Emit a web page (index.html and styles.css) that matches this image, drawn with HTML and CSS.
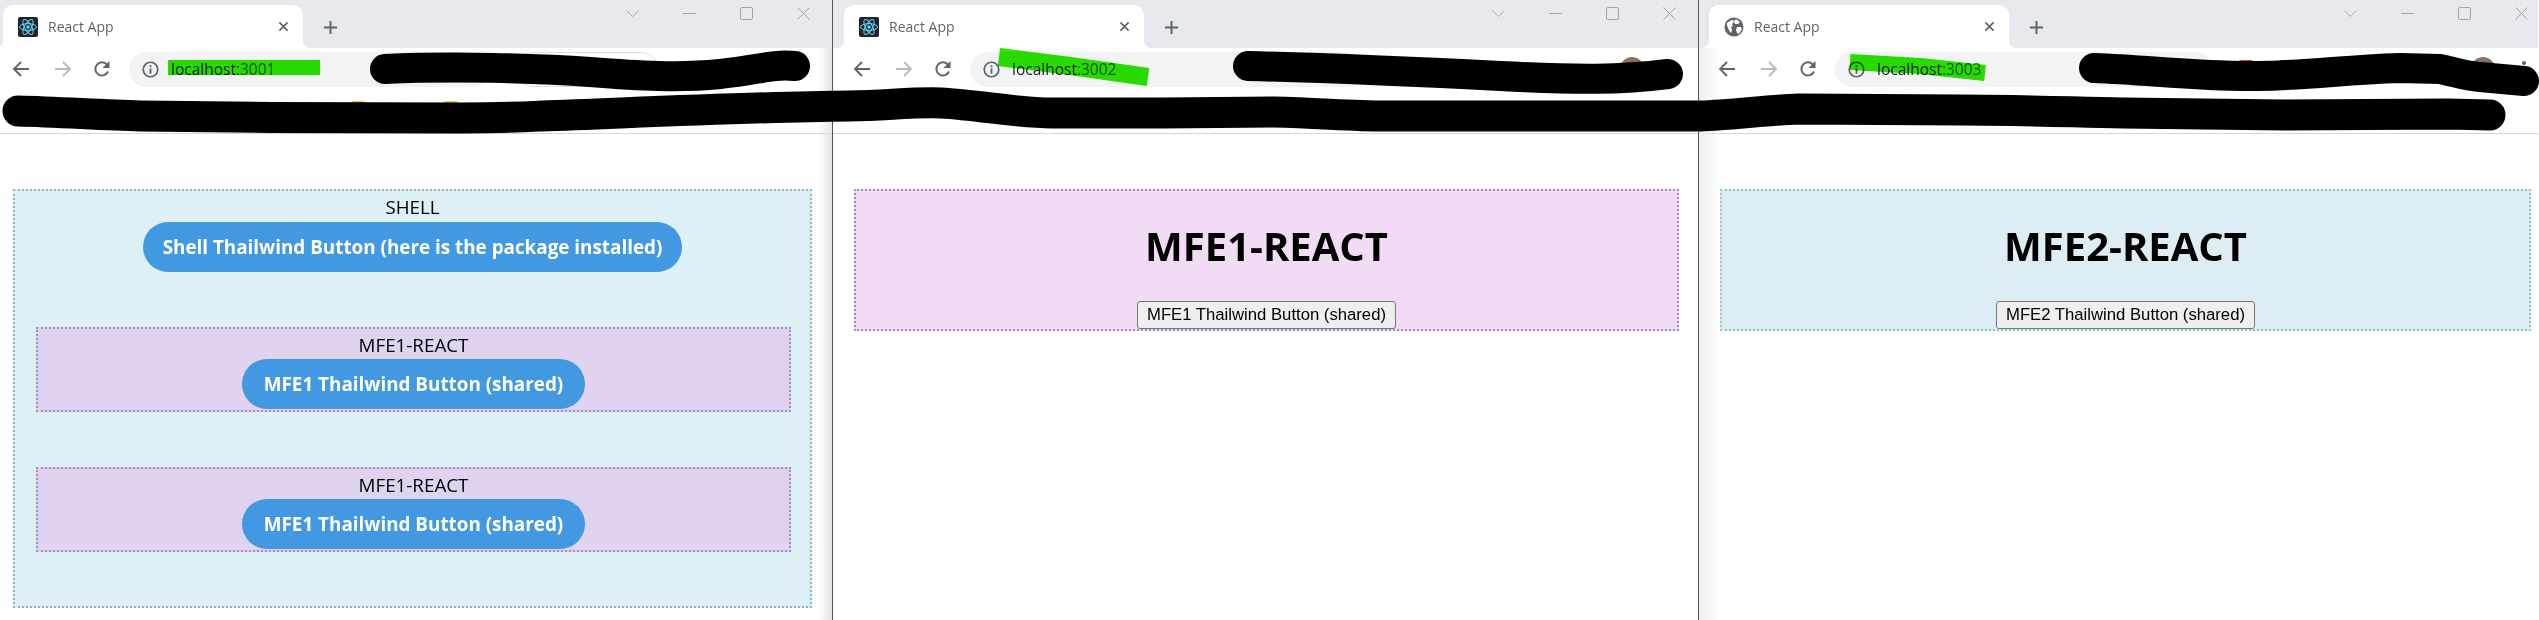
FILE: index.html
```html
<!DOCTYPE html>
<html lang="en">
<head>
    <meta charset="UTF-8">
    <title>React App</title>
    <link rel="stylesheet" href="styles.css">
</head>
<body>
<svg class="sprites" width="0" height="0">
    <symbol id="i-react" viewBox="0 0 20 20">
        <rect width="20" height="20" rx="2" fill="#20232a"/>
        <g fill="none" stroke="#61dafb" stroke-width="1">
            <ellipse cx="10" cy="10" rx="8.5" ry="3.4"/>
            <ellipse cx="10" cy="10" rx="8.5" ry="3.4" transform="rotate(60 10 10)"/>
            <ellipse cx="10" cy="10" rx="8.5" ry="3.4" transform="rotate(120 10 10)"/>
        </g>
        <circle cx="10" cy="10" r="1.7" fill="#61dafb"/>
    </symbol>
    <symbol id="i-globe" viewBox="0 0 20 20">
        <circle cx="10" cy="10" r="9.5" fill="#5f6368"/>
        <path d="M3 6c2-1 3-3 6-3l1 2-2 2 1 2-2 1 1 3-1 3C5 14 4 10 3 9zM12 2l4 3-2 2h-3l-1-3zM13 10l4 0 1 2-3 5-2-1-1-3z" fill="#fff"/>
    </symbol>
    <symbol id="i-back" viewBox="0 0 18 18">
        <path d="M17 9H2M9 2L2 9l7 7" fill="none" stroke="currentColor" stroke-width="1.9"/>
    </symbol>
    <symbol id="i-forward" viewBox="0 0 18 18">
        <path d="M1 9h15M9 2l7 7-7 7" fill="none" stroke="currentColor" stroke-width="1.9"/>
    </symbol>
    <symbol id="i-reload" viewBox="0 0 18 18">
        <path d="M15 11.5A6.6 6.6 0 1 1 14 4.6" fill="none" stroke="currentColor" stroke-width="1.9"/>
        <path d="M16.5 1v7h-7z" fill="currentColor"/>
    </symbol>
    <symbol id="i-info" viewBox="0 0 18 18">
        <circle cx="9" cy="9" r="7.7" fill="none" stroke="currentColor" stroke-width="1.8"/>
        <path d="M8 8h2v5.5H8zM8 4.6h2v2H8z" fill="currentColor"/>
    </symbol>
    <symbol id="i-close" viewBox="0 0 12 12">
        <path d="M1.5 1.5l9 9M10.5 1.5l-9 9" fill="none" stroke="currentColor" stroke-width="1.7"/>
    </symbol>
    <symbol id="i-plus" viewBox="0 0 16 16">
        <path d="M8 1v14M1 8h14" fill="none" stroke="currentColor" stroke-width="2"/>
    </symbol>
    <symbol id="i-chevron" viewBox="0 0 13 13">
        <path d="M.5 3.5l6 6 6-6" fill="none" stroke="currentColor" stroke-width=".9"/>
    </symbol>
    <symbol id="i-min" viewBox="0 0 13 13">
        <path d="M0 6.5h13" fill="none" stroke="currentColor" stroke-width="1"/>
    </symbol>
    <symbol id="i-max" viewBox="0 0 13 13">
        <rect x=".5" y=".5" width="12" height="12" rx="1.5" fill="none" stroke="currentColor" stroke-width="1"/>
    </symbol>
    <symbol id="i-x" viewBox="0 0 13 13">
        <path d="M.5 .5l12 12M12.5 .5l-12 12" fill="none" stroke="currentColor" stroke-width="1"/>
    </symbol>
</svg>

<div class="desktop">
    <!-- 3001 -->
    <div class="window win-shell">
        <div class="tabstrip">
            <div class="tab">
                <svg class="favicon"><use href="#i-react"/></svg>
                <span class="tab-title">React App</span>
                <svg class="tab-close"><use href="#i-close"/></svg>
            </div>
            <svg class="new-tab"><use href="#i-plus"/></svg>
            <div class="win-controls">
                <svg class="ctl"><use href="#i-chevron"/></svg>
                <svg class="ctl"><use href="#i-min"/></svg>
                <svg class="ctl"><use href="#i-max"/></svg>
                <svg class="ctl"><use href="#i-x"/></svg>
            </div>
        </div>
        <div class="toolbar">
            <svg class="nav"><use href="#i-back"/></svg>
            <svg class="nav nav-off"><use href="#i-forward"/></svg>
            <svg class="nav"><use href="#i-reload"/></svg>
            <div class="address">
                <svg class="info"><use href="#i-info"/></svg>
                <span class="host">localhost<span class="port">:3001</span></span>
            </div>
            <div class="search-pill"></div>
            <div class="avatar"></div>
        </div>
        <div class="bookmarks">
            <span class="folder"></span><span class="folder"></span><span class="folder"></span><span class="folder"></span>
        </div>
        <div class="page">
            <div class="shell-box">
                <div class="box-title">SHELL</div>
                <button class="tw-btn">Shell Thailwind Button (here is the package installed)</button>
                <div class="mfe-box">
                    <div class="box-title">MFE1-REACT</div>
                    <button class="tw-btn">MFE1 Thailwind Button (shared)</button>
                </div>
                <div class="mfe-box">
                    <div class="box-title">MFE1-REACT</div>
                    <button class="tw-btn">MFE1 Thailwind Button (shared)</button>
                </div>
            </div>
        </div>
    </div>

    <!-- 3002 -->
    <div class="window win-mfe1">
        <div class="tabstrip">
            <div class="tab">
                <svg class="favicon"><use href="#i-react"/></svg>
                <span class="tab-title">React App</span>
                <svg class="tab-close"><use href="#i-close"/></svg>
            </div>
            <svg class="new-tab"><use href="#i-plus"/></svg>
            <div class="win-controls">
                <svg class="ctl"><use href="#i-chevron"/></svg>
                <svg class="ctl"><use href="#i-min"/></svg>
                <svg class="ctl"><use href="#i-max"/></svg>
                <svg class="ctl"><use href="#i-x"/></svg>
            </div>
        </div>
        <div class="toolbar">
            <svg class="nav"><use href="#i-back"/></svg>
            <svg class="nav nav-off"><use href="#i-forward"/></svg>
            <svg class="nav"><use href="#i-reload"/></svg>
            <div class="address">
                <svg class="info"><use href="#i-info"/></svg>
                <span class="host">localhost<span class="port">:3002</span></span>
            </div>
            <div class="avatar"></div>
        </div>
        <div class="bookmarks"></div>
        <div class="page">
            <div class="remote-box remote-pink">
                <h1 class="remote-title">MFE1-REACT</h1>
                <button class="plain-btn">MFE1 Thailwind Button (shared)</button>
            </div>
        </div>
    </div>

    <!-- 3003 -->
    <div class="window win-mfe2">
        <div class="tabstrip">
            <div class="tab">
                <svg class="favicon"><use href="#i-globe"/></svg>
                <span class="tab-title">React App</span>
                <svg class="tab-close"><use href="#i-close"/></svg>
            </div>
            <svg class="new-tab"><use href="#i-plus"/></svg>
            <div class="win-controls">
                <svg class="ctl"><use href="#i-chevron"/></svg>
                <svg class="ctl"><use href="#i-min"/></svg>
                <svg class="ctl"><use href="#i-max"/></svg>
                <svg class="ctl"><use href="#i-x"/></svg>
            </div>
        </div>
        <div class="toolbar">
            <svg class="nav"><use href="#i-back"/></svg>
            <svg class="nav nav-off"><use href="#i-forward"/></svg>
            <svg class="nav"><use href="#i-reload"/></svg>
            <div class="address">
                <svg class="info"><use href="#i-info"/></svg>
                <span class="host">localhost<span class="port">:3003</span></span>
            </div>
            <span class="ext ext-red"></span>
            <span class="ext ext-dark"></span>
            <div class="avatar"></div>
            <span class="kebab"></span>
        </div>
        <div class="bookmarks"></div>
        <div class="page">
            <div class="remote-box remote-blue">
                <h1 class="remote-title">MFE2-REACT</h1>
                <button class="plain-btn">MFE2 Thailwind Button (shared)</button>
            </div>
        </div>
    </div>
</div>

<!-- marker scribbles drawn over the screenshot -->
<svg class="scribbles" width="2539" height="140" viewBox="0 0 2539 140">
    <g class="mark-green">
        <path d="M168 67.5H320" stroke-width="15"/>
        <path d="M999 57L1070 66L1148 77" stroke-width="18"/>
        <path d="M1850 62L1920 66L1985 73" stroke-width="16"/>
    </g>
    <g class="mark-black">
        <path d="M385 69C450 66 540 68 590 72S680 78 720 74S770 64 795 66" stroke-width="30"/>
        <path d="M1248 66C1330 68 1420 72 1500 76S1620 80 1668 74" stroke-width="30"/>
        <path d="M2094 68C2150 70 2200 77 2258 76S2340 70 2400 68L2440 69C2455 72 2465 76 2480 77L2524 81" stroke-width="30"/>
        <path d="M18 111C60 112 100 115 140 116L271 117.5L461 118C500 118 520 117 542 116C650 112 750 107 850 106C890 105 915 102 941 103C980 105 1015 113 1052 113L1163 113L1274 112C1320 113 1350 116 1385 116L1700 116C1730 115 1770 110 1798 109L1961 110C2020 110 2070 112 2123 113L2285 115L2448 114L2490 115" stroke-width="31"/>
    </g>
</svg>
</body>
</html>
```

FILE: styles.css
```css
* {
    box-sizing: border-box;
}

body {
    margin: 0;
    background: #fff;
    font-family: "Open Sans", "Noto Sans", sans-serif;
    color: #000;
    overflow: hidden;
}

.sprites {
    display: block;
}

.desktop {
    display: flex;
    height: 620px;
}

.window {
    position: relative;
    display: flex;
    flex-direction: column;
    height: 620px;
}

.win-shell {
    width: 833px;
    border-right: 1px solid #555;
    --edge: 0px;
}

.win-mfe1 {
    width: 866px;
    border-right: 1px solid #555;
    --edge: 8px;
}

.win-mfe2 {
    width: 839px;
    --edge: 7px;
}

/* shadow the next window throws on its neighbours */
.win-shell::after,
.win-mfe2::after {
    content: "";
    position: absolute;
    top: 48px;
    bottom: 0;
    pointer-events: none;
}

.win-shell::after {
    right: 0;
    width: 14px;
    background: linear-gradient(to left, #e4e4e4, rgba(255, 255, 255, 0));
}

.win-mfe2::after {
    left: 0;
    width: 24px;
    background: linear-gradient(to right, #f0f0f0, rgba(255, 255, 255, 0));
}

/* tab strip */
.tabstrip {
    display: flex;
    height: 48px;
    padding-left: calc(var(--edge) + 3px);
    background: #e7e9ee;
    align-items: flex-end;
}

.tab {
    position: relative;
    display: flex;
    align-items: center;
    width: 300px;
    height: 43px;
    padding: 0 14px 0 15px;
    background: #fff;
    border-radius: 10px 10px 0 0;
}

.tab::before,
.tab::after {
    content: "";
    position: absolute;
    bottom: 0;
    width: 8px;
    height: 8px;
}

.tab::before {
    left: -8px;
    background: radial-gradient(circle at 0 0, #e7e9ee 8px, #fff 8.5px);
}

.tab::after {
    right: -8px;
    background: radial-gradient(circle at 100% 0, #e7e9ee 8px, #fff 8.5px);
}

.favicon {
    width: 20px;
    height: 20px;
    flex: none;
}

.tab-title {
    margin-left: 10px;
    font-size: 14px;
    color: #5f6368;
    flex: 1;
}

.tab-close {
    width: 11px;
    height: 11px;
    color: #5f6368;
}

.new-tab {
    width: 15px;
    height: 15px;
    margin: 0 0 13px 20px;
    color: #5f6368;
    flex: none;
}

.win-controls {
    display: flex;
    gap: 44px;
    margin-left: auto;
    align-self: flex-start;
    padding: 7px 22px 0 0;
}

.win-mfe2 .win-controls {
    padding-right: 10px;
}

.ctl {
    width: 13px;
    height: 13px;
    color: #a2a4a8;
}

/* toolbar */
.toolbar {
    display: flex;
    align-items: center;
    height: 42px;
    padding-left: calc(var(--edge) + 12px);
    background: #fff;
}

.nav {
    width: 18px;
    height: 18px;
    margin-right: 24px;
    color: #5f6368;
    flex: none;
}

.nav-off {
    color: #b9bbbe;
    margin-right: 21px;
}

.nav:nth-child(3) {
    margin-right: 18px;
}

.address {
    display: flex;
    align-items: center;
    height: 35px;
    padding-left: 13px;
    background: #f1f3f4;
    border-radius: 18px;
}

.win-shell .address {
    width: 362px;
}

.win-mfe1 .address {
    width: 394px;
}

.win-mfe2 .address {
    width: 379px;
}

.info {
    width: 17px;
    height: 17px;
    color: #5f6368;
    flex: none;
}

.host {
    margin-left: 12px;
    font-size: 15.5px;
    color: #202124;
}

.port {
    color: #5f6368;
}

.search-pill {
    width: 143px;
    height: 35px;
    margin-left: 25px;
    border: 1px solid #dadce0;
    border-radius: 18px;
}

.ext {
    width: 16px;
    height: 18px;
    border-radius: 3px;
}

.ext-red {
    margin-left: 24px;
    background: #e53935;
}

.ext-dark {
    margin-left: 25px;
    background: #3c4043;
}

.avatar {
    width: 24px;
    height: 24px;
    margin-left: auto;
    margin-right: 56px;
    border-radius: 50%;
    background: #8d6e63;
    flex: none;
}

.win-mfe1 .avatar {
    margin-right: 54px;
}

.win-mfe2 .avatar {
    margin-right: 27px;
}

.kebab {
    width: 4px;
    height: 4px;
    margin-right: 12px;
    border-radius: 50%;
    background: #5f6368;
    box-shadow: 0 -6px 0 #5f6368, 0 6px 0 #5f6368;
    flex: none;
}

/* bookmarks bar */
.bookmarks {
    display: flex;
    height: 44px;
    padding: 11px 0 0 98px;
    border-bottom: 1px solid #d6d6d6;
    background: #fff;
}

.folder {
    width: 14px;
    height: 13px;
    border-radius: 2px;
    background: #f2c037;
}

.folder:nth-child(2) {
    margin-left: 71px;
}

.folder:nth-child(3) {
    margin-left: 154px;
}

.folder:nth-child(4) {
    margin-left: 79px;
}

/* page content */
.page {
    flex: 1;
    padding: 55px 20px 0 13px;
    background: #fff;
}

.win-mfe1 .page {
    padding: 55px 19px 0 21px;
}

.win-mfe2 .page {
    padding: 55px 7px 0 21px;
}

.shell-box {
    display: flex;
    flex-direction: column;
    align-items: center;
    height: 419px;
    border: 2px dotted #8fb3c0;
    background: #dcf0f6;
}

.box-title {
    font-size: 18.8px;
    line-height: 33px;
    height: 31px;
    text-align: center;
}

.mfe-box {
    display: flex;
    flex-direction: column;
    align-items: center;
    align-self: stretch;
    height: 85px;
    margin: 55px 19px 0 21px;
    border: 2px dotted #a78bc4;
    background: #dfd3f0;
}

.mfe-box .box-title {
    height: 30px;
    line-height: 32px;
}

.tw-btn {
    height: 50px;
    padding: 0 20px;
    border: 0;
    border-radius: 25px;
    background: #4299e1;
    color: #fff;
    font-family: "Open Sans", "Noto Sans", sans-serif;
    font-size: 18.85px;
    font-weight: 700;
    flex: none;
}

.mfe-box .tw-btn {
    padding: 0 22px;
}

.remote-box {
    display: flex;
    flex-direction: column;
    align-items: center;
    height: 142px;
    border: 2px dotted #a78bc4;
}

.remote-pink {
    background: #f2dcf5;
}

.remote-blue {
    border-color: #8cc5c8;
    background: #dcedf4;
}

.remote-title {
    height: 110px;
    margin: 0;
    font-size: 40px;
    font-weight: 700;
    line-height: 110px;
}

.plain-btn {
    height: 28px;
    padding: 0 9px;
    border: 1px solid #767676;
    border-radius: 3px;
    background: #efefef;
    color: #000;
    font-family: "Liberation Sans", Arial, sans-serif;
    font-size: 16.7px;
    flex: none;
}

/* marker overlay */
.scribbles {
    position: absolute;
    left: 0;
    top: 0;
    pointer-events: none;
}

.mark-green path {
    fill: none;
    stroke: #2ae500;
    stroke-linejoin: round;
}

.mark-green {
    mix-blend-mode: multiply;
}

.mark-black path {
    fill: none;
    stroke: #000;
    stroke-linecap: round;
    stroke-linejoin: round;
}
```
